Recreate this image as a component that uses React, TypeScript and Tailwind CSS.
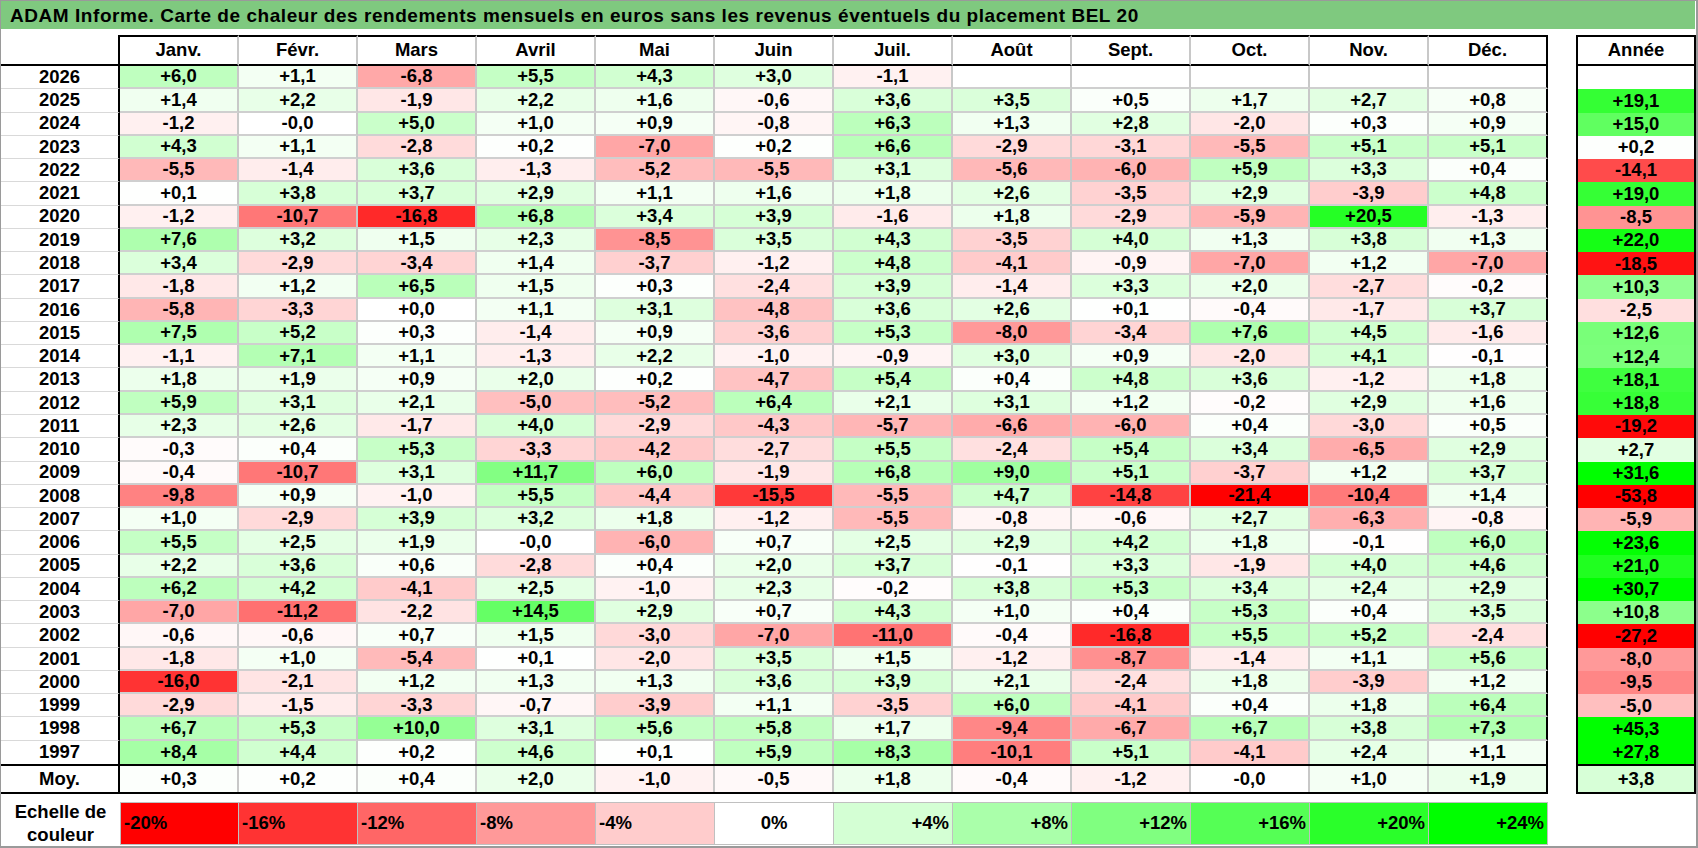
import React from "react";

const months = ["Janv.", "Févr.", "Mars", "Avril", "Mai", "Juin", "Juil.", "Août", "Sept.", "Oct.", "Nov.", "Déc."];

const raw = `2026|+6,0 +1,1 -6,8 +5,5 +4,3 +3,0 -1,1 _ _ _ _ _|_
2025|+1,4 +2,2 -1,9 +2,2 +1,6 -0,6 +3,6 +3,5 +0,5 +1,7 +2,7 +0,8|+19,1
2024|-1,2 -0,0 +5,0 +1,0 +0,9 -0,8 +6,3 +1,3 +2,8 -2,0 +0,3 +0,9|+15,0
2023|+4,3 +1,1 -2,8 +0,2 -7,0 +0,2 +6,6 -2,9 -3,1 -5,5 +5,1 +5,1|+0,2
2022|-5,5 -1,4 +3,6 -1,3 -5,2 -5,5 +3,1 -5,6 -6,0 +5,9 +3,3 +0,4|-14,1
2021|+0,1 +3,8 +3,7 +2,9 +1,1 +1,6 +1,8 +2,6 -3,5 +2,9 -3,9 +4,8|+19,0
2020|-1,2 -10,7 -16,8 +6,8 +3,4 +3,9 -1,6 +1,8 -2,9 -5,9 +20,5 -1,3|-8,5
2019|+7,6 +3,2 +1,5 +2,3 -8,5 +3,5 +4,3 -3,5 +4,0 +1,3 +3,8 +1,3|+22,0
2018|+3,4 -2,9 -3,4 +1,4 -3,7 -1,2 +4,8 -4,1 -0,9 -7,0 +1,2 -7,0|-18,5
2017|-1,8 +1,2 +6,5 +1,5 +0,3 -2,4 +3,9 -1,4 +3,3 +2,0 -2,7 -0,2|+10,3
2016|-5,8 -3,3 +0,0 +1,1 +3,1 -4,8 +3,6 +2,6 +0,1 -0,4 -1,7 +3,7|-2,5
2015|+7,5 +5,2 +0,3 -1,4 +0,9 -3,6 +5,3 -8,0 -3,4 +7,6 +4,5 -1,6|+12,6
2014|-1,1 +7,1 +1,1 -1,3 +2,2 -1,0 -0,9 +3,0 +0,9 -2,0 +4,1 -0,1|+12,4
2013|+1,8 +1,9 +0,9 +2,0 +0,2 -4,7 +5,4 +0,4 +4,8 +3,6 -1,2 +1,8|+18,1
2012|+5,9 +3,1 +2,1 -5,0 -5,2 +6,4 +2,1 +3,1 +1,2 -0,2 +2,9 +1,6|+18,8
2011|+2,3 +2,6 -1,7 +4,0 -2,9 -4,3 -5,7 -6,6 -6,0 +0,4 -3,0 +0,5|-19,2
2010|-0,3 +0,4 +5,3 -3,3 -4,2 -2,7 +5,5 -2,4 +5,4 +3,4 -6,5 +2,9|+2,7
2009|-0,4 -10,7 +3,1 +11,7 +6,0 -1,9 +6,8 +9,0 +5,1 -3,7 +1,2 +3,7|+31,6
2008|-9,8 +0,9 -1,0 +5,5 -4,4 -15,5 -5,5 +4,7 -14,8 -21,4 -10,4 +1,4|-53,8
2007|+1,0 -2,9 +3,9 +3,2 +1,8 -1,2 -5,5 -0,8 -0,6 +2,7 -6,3 -0,8|-5,9
2006|+5,5 +2,5 +1,9 -0,0 -6,0 +0,7 +2,5 +2,9 +4,2 +1,8 -0,1 +6,0|+23,6
2005|+2,2 +3,6 +0,6 -2,8 +0,4 +2,0 +3,7 -0,1 +3,3 -1,9 +4,0 +4,6|+21,0
2004|+6,2 +4,2 -4,1 +2,5 -1,0 +2,3 -0,2 +3,8 +5,3 +3,4 +2,4 +2,9|+30,7
2003|-7,0 -11,2 -2,2 +14,5 +2,9 +0,7 +4,3 +1,0 +0,4 +5,3 +0,4 +3,5|+10,8
2002|-0,6 -0,6 +0,7 +1,5 -3,0 -7,0 -11,0 -0,4 -16,8 +5,5 +5,2 -2,4|-27,2
2001|-1,8 +1,0 -5,4 +0,1 -2,0 +3,5 +1,5 -1,2 -8,7 -1,4 +1,1 +5,6|-8,0
2000|-16,0 -2,1 +1,2 +1,3 +1,3 +3,6 +3,9 +2,1 -2,4 +1,8 -3,9 +1,2|-9,5
1999|-2,9 -1,5 -3,3 -0,7 -3,9 +1,1 -3,5 +6,0 -4,1 +0,4 +1,8 +6,4|-5,0
1998|+6,7 +5,3 +10,0 +3,1 +5,6 +5,8 +1,7 -9,4 -6,7 +6,7 +3,8 +7,3|+45,3
1997|+8,4 +4,4 +0,2 +4,6 +0,1 +5,9 +8,3 -10,1 +5,1 -4,1 +2,4 +1,1|+27,8`;

type Row = { year: string; m: string[]; a: string };

const rows: Row[] = raw.split("\n").map((line) => {
  const [year, ms, a] = line.split("|");
  return { year, m: ms.split(" ").map((v) => (v === "_" ? "" : v)), a: a === "_" ? "" : a };
});

const avg: Row = {
  year: "Moy.",
  m: "+0,3 +0,2 +0,4 +2,0 -1,0 -0,5 +1,8 -0,4 -1,2 -0,0 +1,0 +1,9".split(" "),
  a: "+3,8",
};

function heat(s: string): string {
  if (!s) return "#ffffff";
  const v = parseFloat(s.replace(",", "."));
  if (v < 0) {
    const t = Math.min(1, -v / 20);
    const c = Math.round(255 * (1 - t));
    return `rgb(255,${c},${c})`;
  }
  const t = Math.min(1, v / 24);
  const c = Math.round(255 * (1 - t));
  return `rgb(${c},255,${c})`;
}

const scale = [
  { label: "-20%", cls: "bg-[#ff0000] justify-start pl-[3px]" },
  { label: "-16%", cls: "bg-[#ff3333] justify-start pl-[3px]" },
  { label: "-12%", cls: "bg-[#ff6666] justify-start pl-[3px]" },
  { label: "-8%", cls: "bg-[#ff9999] justify-start pl-[3px]" },
  { label: "-4%", cls: "bg-[#ffcccc] justify-start pl-[3px]" },
  { label: "0%", cls: "bg-white justify-center" },
  { label: "+4%", cls: "bg-[#d4ffd4] justify-end pr-[3px]" },
  { label: "+8%", cls: "bg-[#aaffaa] justify-end pr-[3px]" },
  { label: "+12%", cls: "bg-[#80ff80] justify-end pr-[3px]" },
  { label: "+16%", cls: "bg-[#55ff55] justify-end pr-[3px]" },
  { label: "+20%", cls: "bg-[#2aff2a] justify-end pr-[3px]" },
  { label: "+24%", cls: "bg-[#00ff00] justify-end pr-[3px]" },
];

function DataRow({ r, last }: { r: Row; last: boolean }) {
  return (
    <div className="flex h-[23.27px]">
      <div
        className={`w-[119px] flex items-center justify-center border-r-2 border-r-black ${
          last ? "" : "border-b border-b-[#d9d9d9]"
        }`}
      >
        {r.year}
      </div>
      {r.m.map((v, i) => (
        <div
          key={i}
          className={`w-[119px] flex items-center justify-center border-r-2 ${
            i === 11 ? "border-r-black" : "border-r-[#c8c8c8]"
          } ${last ? "" : "border-b-2 border-b-[#cfcfcf]"}`}
          style={{ backgroundColor: heat(v) }}
        >
          {v}
        </div>
      ))}
    </div>
  );
}

export default function App() {
  return (
    <div className="w-[1698px] h-[848px] bg-white border-l border-t border-r-2 border-b-2 border-[#9a9a9a] font-['Liberation_Sans',Arial,sans-serif] font-bold text-black text-[18.5px] leading-none overflow-hidden">
      <div className="h-[28px] bg-[#7fc97f] mr-[1px] pl-[9px] flex items-center text-[19px] tracking-[0.55px]">
        ADAM Informe. Carte de chaleur des rendements mensuels en euros sans les revenus éventuels du placement BEL 20
      </div>
      <div className="mt-[6px] flex">
        <div className="w-[1547px]">
          <div className="flex h-[31px]">
            <div className="w-[119px] border-r-2 border-b-2 border-black" />
            {months.map((m, i) => (
              <div
                key={m}
                className={`w-[119px] flex items-center justify-center border-t-2 border-b-2 border-t-black border-b-black border-r-2 ${
                  i === 11 ? "border-r-black" : "border-r-[#c8c8c8]"
                }`}
              >
                {m}
              </div>
            ))}
          </div>
          {rows.map((r, i) => (
            <DataRow key={r.year} r={r} last={i === rows.length - 1} />
          ))}
          <div className="flex h-[30px] border-t-2 border-b-2 border-black">
            <div className="w-[119px] flex items-center justify-center border-r-2 border-r-black">{avg.year}</div>
            {avg.m.map((v, i) => (
              <div
                key={i}
                className={`w-[119px] flex items-center justify-center border-r-2 ${
                  i === 11 ? "border-r-black" : "border-r-[#c8c8c8]"
                }`}
                style={{ backgroundColor: heat(v) }}
              >
                {v}
              </div>
            ))}
          </div>
        </div>
        <div className="w-[28px]" />
        <div className="w-[120px] flex flex-col">
          <div className="h-[31px] flex items-center justify-center border-2 border-black">Année</div>
          <div className="border-l-2 border-r-2 border-black">
            {rows.map((r) => (
              <div
                key={r.year}
                className="h-[23.27px] flex items-center justify-center"
                style={{ backgroundColor: heat(r.a) }}
              >
                {r.a}
              </div>
            ))}
          </div>
          <div
            className="h-[30px] flex items-center justify-center border-2 border-black"
            style={{ backgroundColor: heat(avg.a) }}
          >
            {avg.a}
          </div>
        </div>
      </div>
      <div className="mt-[8px] flex h-[43px]">
        <div className="w-[119px] flex flex-col items-center justify-center leading-[23px]">
          <span>Echelle de</span>
          <span>couleur</span>
        </div>
        {scale.map((s, i) => (
          <div
            key={s.label}
            className={`w-[119px] flex items-center border-t border-b border-r border-[#c0c0c0] ${
              i === 0 ? "border-l" : ""
            } ${s.cls}`}
          >
            {s.label}
          </div>
        ))}
      </div>
    </div>
  );
}
